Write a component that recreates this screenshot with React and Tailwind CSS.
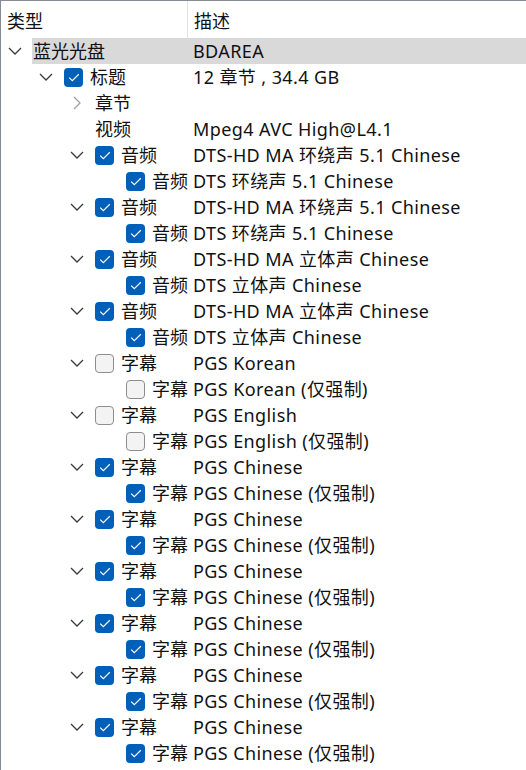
import React from 'react';

const FONT = { fontFamily: '"Noto Sans", "Noto Sans CJK SC", sans-serif' };

const sub = (lang, checked) => [
  { lv: 2, exp: 'down', cb: checked, name: '字幕', desc: `PGS ${lang}` },
  { lv: 3, cb: checked, name: '字幕', desc: `PGS ${lang} (仅强制)` },
];

const rows = [
  { lv: 0, exp: 'down', name: '蓝光光盘', desc: 'BDAREA', selected: true },
  { lv: 1, exp: 'down', cb: true, name: '标题', desc: '12 章节 , 34.4 GB' },
  { lv: 2, exp: 'right', name: '章节', desc: '' },
  { lv: 2, name: '视频', desc: 'Mpeg4 AVC High@L4.1' },
  { lv: 2, exp: 'down', cb: true, name: '音频', desc: 'DTS-HD MA 环绕声 5.1 Chinese' },
  { lv: 3, cb: true, name: '音频', desc: 'DTS 环绕声 5.1 Chinese' },
  { lv: 2, exp: 'down', cb: true, name: '音频', desc: 'DTS-HD MA 环绕声 5.1 Chinese' },
  { lv: 3, cb: true, name: '音频', desc: 'DTS 环绕声 5.1 Chinese' },
  { lv: 2, exp: 'down', cb: true, name: '音频', desc: 'DTS-HD MA 立体声 Chinese' },
  { lv: 3, cb: true, name: '音频', desc: 'DTS 立体声 Chinese' },
  { lv: 2, exp: 'down', cb: true, name: '音频', desc: 'DTS-HD MA 立体声 Chinese' },
  { lv: 3, cb: true, name: '音频', desc: 'DTS 立体声 Chinese' },
  ...sub('Korean', false),
  ...sub('English', false),
  ...sub('Chinese', true),
  ...sub('Chinese', true),
  ...sub('Chinese', true),
  ...sub('Chinese', true),
  ...sub('Chinese', true),
  ...sub('Chinese', true),
  { lv: 2, exp: 'down', cb: false, name: '字幕', desc: 'PGS Chinese' },
];

// indent before the expander box, and width left for the name column
const indentW = ['w-0', 'w-[31px]', 'w-[62px]', 'w-[93px]'];
const nameW = ['w-[156px]', 'w-[125px]', 'w-[94px]', 'w-[63px]'];

const Chevron = ({ dir }) => {
  if (dir === 'down') {
    return (
      <svg width="14" height="8" viewBox="0 0 14 8" fill="none">
        <path d="M1 1 L7 7 L13 1" stroke="#3a3a3a" strokeWidth="1.3" />
      </svg>
    );
  }
  if (dir === 'right') {
    return (
      <svg width="8" height="14" viewBox="0 0 8 14" fill="none" className="ml-[3px]">
        <path d="M1 1 L7 7 L1 13" stroke="#a0a0a0" strokeWidth="1.3" />
      </svg>
    );
  }
  return null;
};

const Checkbox = ({ checked }) =>
  checked ? (
    <div className="w-[19px] h-[19px] rounded-[4px] bg-[#005fb8] flex items-center justify-center shrink-0">
      <svg width="12" height="9" viewBox="0 0 12 9" fill="none">
        <path d="M1.2 4.6 L4.3 7.6 L10.8 1.2" stroke="white" strokeWidth="1.2" />
      </svg>
    </div>
  ) : (
    <div className="w-[19px] h-[19px] rounded-[4px] bg-[#f3f3f3] border border-[#8d8d8d] shrink-0" />
  );

const Row = ({ row }) => (
  <div className="flex h-[26px] items-center">
    <div className={`${indentW[row.lv]} shrink-0`} />
    <div className="w-[31px] h-full shrink-0 flex items-center pl-[7px]">
      <Chevron dir={row.exp} />
    </div>
    <div className={`flex-1 flex h-full items-center ${row.selected ? 'bg-[#d9d9d9]' : ''}`}>
      <div className={`${nameW[row.lv]} shrink-0 flex items-center overflow-hidden whitespace-nowrap`}>
        {row.cb !== undefined && (
          <div className="ml-[1px] mr-[7px]">
            <Checkbox checked={row.cb} />
          </div>
        )}
        <span className={row.cb === undefined ? 'pl-[1px]' : ''}>{row.name}</span>
      </div>
      <div className="pl-[5px] whitespace-nowrap tracking-[0.4px]">{row.desc}</div>
    </div>
  </div>
);

export default function App() {
  return (
    <div
      className="w-[526px] h-[770px] overflow-hidden bg-white border-t border-l border-[#858b91] text-[18px] leading-[26px] text-[#111]"
      style={FONT}
    >
      <div className="flex h-[37px]">
        <div className="w-[187px] border-r border-[#e3e3e3] pl-[6px] pt-[3px] flex items-center">类型</div>
        <div className="pl-[6px] pt-[3px] flex items-center">描述</div>
      </div>
      {rows.map((row, i) => (
        <Row key={i} row={row} />
      ))}
    </div>
  );
}
